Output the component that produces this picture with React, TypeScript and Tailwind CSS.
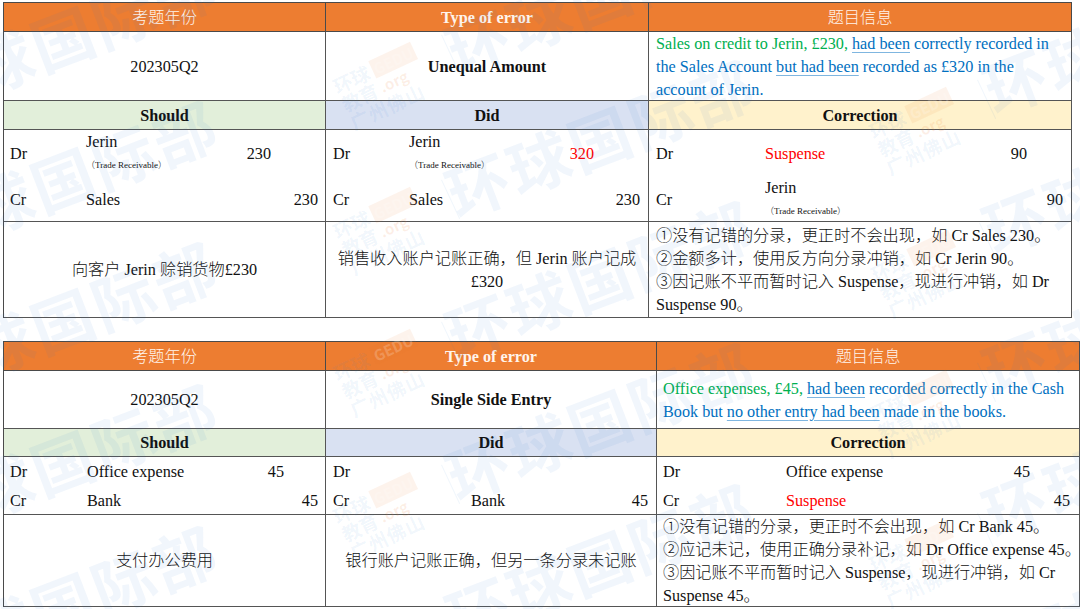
import type { ReactNode } from "react";

const hd = "flex items-center justify-center pt-[2px] bg-[#ed7d31] text-[#fff4ec] border-r border-b border-[#4a4a4a]";
const c = "border-r border-b border-[#555]";
const u = "underline underline-offset-[3px] decoration-[#7fb6e0]";
const ctr = `${c} pt-[2px] flex items-center justify-center`;
const txt = `${c} pt-[2px] flex items-center whitespace-nowrap`;

function JerinTR() {
  return (
    <div className="flex flex-col">
      <span className="h-[23px] leading-[23px]">Jerin</span>
      <span className="h-[23px] leading-[23px] text-[9px]">（Trade Receivable）</span>
    </div>
  );
}

function Ledger({ cols, rowH, pad, rows }: { cols: string; rowH: string; pad: string; rows: ReactNode[][] }) {
  return (
    <div className={`${c} pt-px ${pad} ${rowH} grid items-center ${cols}`}>
      {rows.flat().map((n, i) => (
        <div key={i} className={i % 4 >= 2 ? "text-right" : ""}>{n}</div>
      ))}
    </div>
  );
}

const Red = ({ children }: { children: ReactNode }) => <span className="text-[#ff0000]">{children}</span>;

const Big = ({ x, y }: { x: number; y: number }) => (
  <div
    className="absolute -translate-x-1/2 -translate-y-1/2 whitespace-nowrap text-[62px] leading-none font-bold tracking-[3px] text-[#2f7fd6]/[0.065] -rotate-[21deg] font-['Noto_Sans_CJK_SC',sans-serif]"
    style={{ left: x, top: y }}
  >
    环球国际部
  </div>
);

const Stamp = ({ x, y }: { x: number; y: number }) => (
  <div className="absolute w-[96px] -translate-x-1/2 -translate-y-1/2 -rotate-[25deg] font-['Noto_Sans_CJK_SC',sans-serif] font-bold" style={{ left: x, top: y }}>
    <div className="flex gap-[4px] items-center">
      <div className="text-[19px] leading-[20px] text-[#2f7fd6]/[0.08]">环球<br />教育</div>
      <div className="text-[15px] leading-[19px] text-[#ed7d31]/[0.12]">
        <span className="block bg-[#ed7d31]/[0.09] px-[2px] text-white/20">GEDU</span>
        <span className="block">.org</span>
      </div>
    </div>
    <div className="text-[19px] leading-[20px] text-[#2f7fd6]/[0.08] tracking-[1px] whitespace-nowrap">广州佛山</div>
    <div className="absolute left-[119px] top-[8px] w-px h-[43px] bg-[#2f7fd6]/[0.07]" />
  </div>
);

const bigs = [
  [63, 36], [63, 177], [63, 318], [63, 460], [63, 602],
  [600, -7], [600, 136], [600, 277], [600, 419], [600, 560],
  [1137, 32], [1137, 172], [1137, 314], [1137, 456], [1137, 596],
];
const stamps = [
  [386, 85], [386, 230], [386, 372], [386, 515],
  [922, 130], [924, 273], [922, 413], [922, 563],
];

export default function App() {
  return (
    <div className="relative w-[1080px] h-[609px] overflow-hidden bg-white text-[#111] text-[16.2px] leading-[23px] font-['Liberation_Serif','Noto_Sans_CJK_SC',serif] font-light">
      <div className="pt-[2px] pl-[3px]">
        {/* Table 1 */}
        <div className="w-[1069px] border-t border-l border-[#4a4a4a] grid grid-cols-[322px_323px_423px] grid-rows-[29px_69px_29px_92px_96px]">
          <div className={hd}>考题年份</div>
          <div className={`${hd} font-bold`}>Type of error</div>
          <div className={hd}>题目信息</div>

          <div className={ctr}>202305Q2</div>
          <div className={`${ctr} font-bold`}>Unequal Amount</div>
          <div className={`${txt} px-[7px] text-[#0070c0]`}>
            <div>
              <span className="text-[#00b050]">Sales on credit to Jerin, £230, </span>
              <span className={u}>had been</span> correctly recorded in<br />
              the Sales Account <span className={u}>but had been</span> recorded as £320 in the<br />
              account of Jerin.
            </div>
          </div>

          <div className={`${ctr} bg-[#e2efda] font-bold`}>Should</div>
          <div className={`${ctr} bg-[#d9e1f2] font-bold`}>Did</div>
          <div className={`${ctr} bg-[#fff2cc] font-bold`}>Correction</div>

          <Ledger cols="grid-cols-[76px_145px_40px_47px]" rowH="grid-rows-[46px_46px]" pad="pl-[6px] pr-[7px]" rows={[["Dr", <JerinTR />, "230", ""], ["Cr", "Sales", "", "230"]]} />
          <Ledger cols="grid-cols-[76px_145px_40px_46px]" rowH="grid-rows-[46px_46px]" pad="pl-[7px] pr-[7px]" rows={[["Dr", <JerinTR />, <Red>320</Red>, ""], ["Cr", "Sales", "", "230"]]} />
          <Ledger cols="grid-cols-[109px_222px_40px_36px]" rowH="grid-rows-[46px_46px]" pad="pl-[7px] pr-[7px]" rows={[["Dr", <Red>Suspense</Red>, "90", ""], ["Cr", <JerinTR />, "", "90"]]} />

          <div className={`${ctr} text-center`}>向客户 Jerin 赊销货物£230</div>
          <div className={`${ctr} text-center`}>
            <div>销售收入账户记账正确，但 Jerin 账户记成<br />£320</div>
          </div>
          <div className={`${txt} px-[7px]`}>
            <div>
              ①没有记错的分录，更正时不会出现，如 Cr Sales 230。<br />
              ②金额多计，使用反方向分录冲销，如 Cr Jerin 90。<br />
              ③因记账不平而暂时记入 Suspense，现进行冲销，如 Dr<br />
              Suspense 90。
            </div>
          </div>
        </div>

        {/* Table 2 */}
        <div className="mt-[23px] w-[1077px] border-t border-l border-[#4a4a4a] grid grid-cols-[322px_331px_423px] grid-rows-[29px_58px_28px_58px_92px]">
          <div className={hd}>考题年份</div>
          <div className={`${hd} font-bold`}>Type of error</div>
          <div className={hd}>题目信息</div>

          <div className={ctr}>202305Q2</div>
          <div className={`${ctr} font-bold`}>Single Side Entry</div>
          <div className={`${txt} px-[6px] text-[#0070c0]`}>
            <div>
              <span className="text-[#00b050]">Office expenses, £45, </span>
              <span className={u}>had been</span> recorded correctly in the Cash<br />
              Book but <span className={u}>no other entry had been</span> made in the books.
            </div>
          </div>

          <div className={`${ctr} bg-[#e2efda] font-bold`}>Should</div>
          <div className={`${ctr} bg-[#d9e1f2] font-bold`}>Did</div>
          <div className={`${ctr} bg-[#fff2cc] font-bold`}>Correction</div>

          <Ledger cols="grid-cols-[77px_157px_40px_34px]" rowH="grid-rows-[29px_28px]" pad="pl-[6px] pr-[7px]" rows={[["Dr", "Office expense", "45", ""], ["Cr", "Bank", "", "45"]]} />
          <Ledger cols="grid-cols-[138px_137px_0px_40px]" rowH="grid-rows-[29px_28px]" pad="pl-[7px] pr-[7px]" rows={[["Dr", "", "", ""], ["Cr", "Bank", "", "45"]]} />
          <Ledger cols="grid-cols-[123px_204px_40px_40px]" rowH="grid-rows-[29px_28px]" pad="pl-[6px] pr-[7px]" rows={[["Dr", "Office expense", "45", ""], ["Cr", <Red>Suspense</Red>, "", "45"]]} />

          <div className={`${ctr} text-center`}>支付办公费用</div>
          <div className={`${ctr} text-center`}>银行账户记账正确，但另一条分录未记账</div>
          <div className={`${txt} px-[6px]`}>
            <div>
              ①没有记错的分录，更正时不会出现，如 Cr Bank 45。<br />
              ②应记未记，使用正确分录补记，如 Dr Office expense 45。<br />
              ③因记账不平而暂时记入 Suspense，现进行冲销，如 Cr<br />
              Suspense 45。
            </div>
          </div>
        </div>
      </div>

      {/* watermark */}
      <div className="absolute inset-0 pointer-events-none overflow-hidden">
        {bigs.map(([x, y]) => <Big key={`${x}-${y}`} x={x} y={y} />)}
        {stamps.map(([x, y]) => <Stamp key={`${x}-${y}`} x={x} y={y} />)}
      </div>
    </div>
  );
}
